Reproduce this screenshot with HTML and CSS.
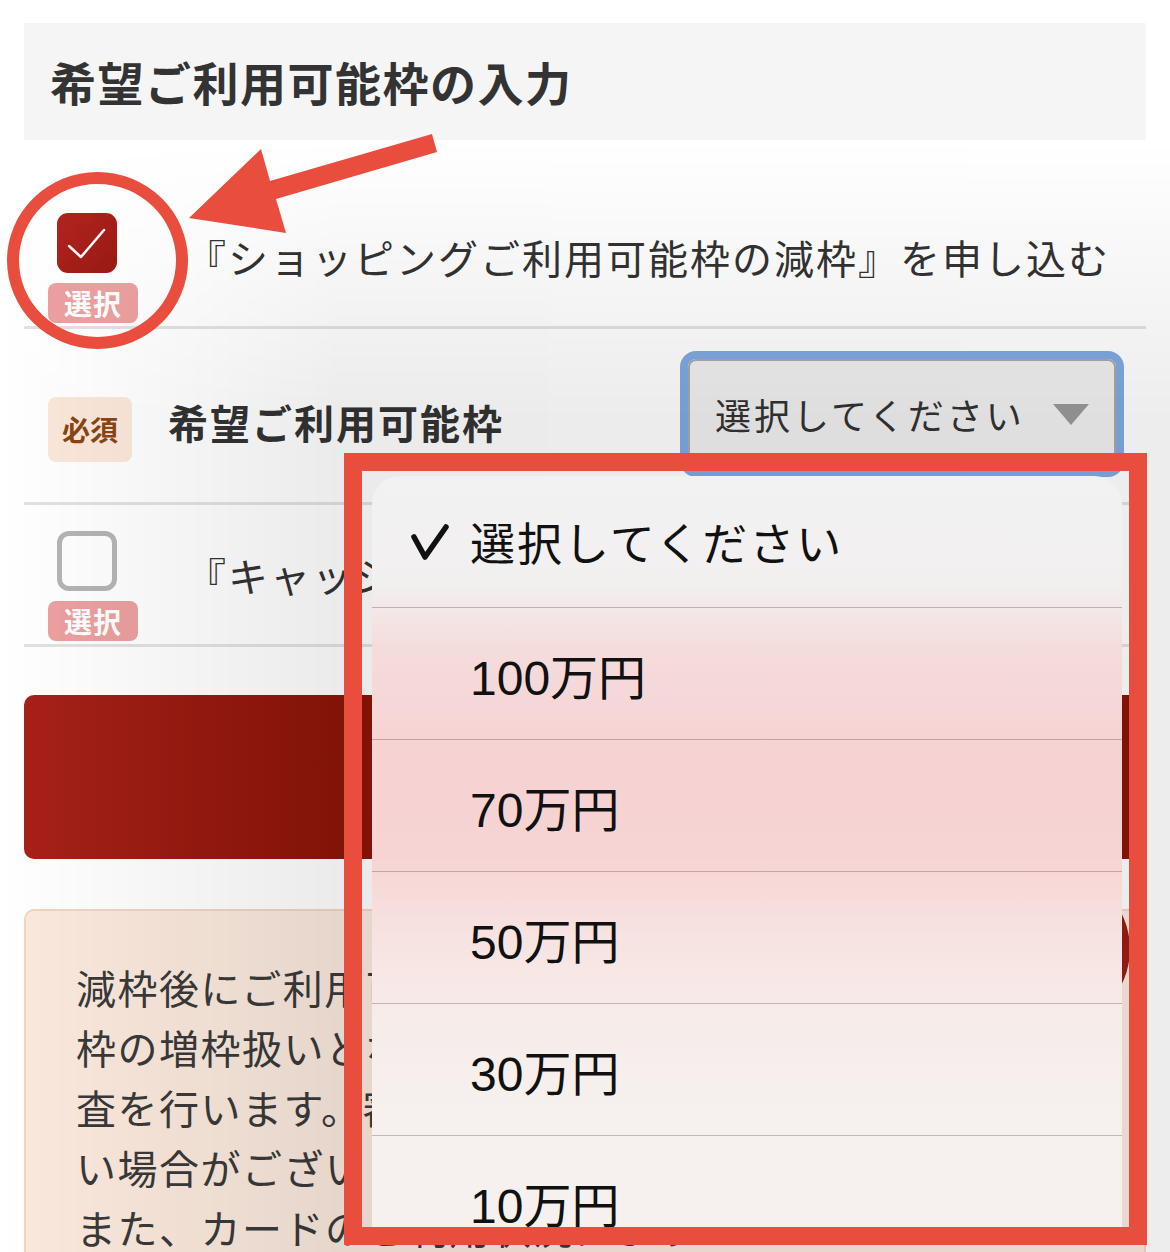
FILE: index.html
```html
<!doctype html>
<html lang="ja">
    <head>
        <meta charset="UTF-8">
        <meta name="viewport" content="width=device-width, initial-scale=1.0">
        <title>希望ご利用可能枠の入力</title>
        <link rel="stylesheet" href="styles.css">
    </head>
    <body>
        <div class="page">
            <h1 class="section-title">希望ご利用可能枠の入力</h1>

            <div class="apply-row">
                <div class="check-col">
                    <span class="checkbox checked">
                        <svg width="60" height="60" viewBox="0 0 60 60"><polyline points="12,33 24,44 47,17" fill="none" stroke="#fff" stroke-width="2.5" stroke-linecap="round" stroke-linejoin="round"/></svg>
                    </span>
                    <span class="check-tag">選択</span>
                </div>
                <p class="apply-text">『ショッピングご利用可能枠の減枠』を申し込む</p>
            </div>

            <div class="limit-row">
                <span class="required">必須</span>
                <span class="limit-label">希望ご利用可能枠</span>
                <div class="select-box">
                    <div class="select-inner">
                        <span>選択してください</span>
                        <span class="caret"></span>
                    </div>
                </div>
            </div>

            <div class="apply-row apply-row-cash">
                <div class="check-col">
                    <span class="checkbox unchecked"></span>
                    <span class="check-tag">選択</span>
                </div>
                <p class="apply-text">『キャッシングご利用可能枠の減枠』を申し込む</p>
            </div>

            <button class="submit-btn" type="button">確認画面へ進む</button>

            <div class="notice">
                <span class="notice-icon"></span>
                <p class="notice-text">減枠後にご利用可能枠を増やす場合は、ご利用可能<br>枠の増枠扱いとなり、所定の審<br>査を行います。審査の結果、ご希望に添えな<br>い場合がございます。<br>また、カードのご利用状況により</p>
            </div>
        </div>

        <div class="dim"></div>

        <div class="mark-circle"></div>
        <svg class="mark-arrow" width="450" height="250" viewBox="0 0 450 250">
            <polygon points="189,218 261,149 270,181 432,134 437,152 276,199 286,233" fill="#e84d3d"/>
        </svg>

        <div class="mark-box">
            <ul class="picker">
                <li class="picker-item picker-current">
                    <svg class="picker-check" width="62" height="44" viewBox="0 0 62 44"><polyline points="10,17 21,37 42,7" fill="none" stroke="#111" stroke-width="5.5" stroke-linecap="round" stroke-linejoin="round"/></svg>
                    <span class="picker-label">選択してください</span>
                </li>
                <li class="picker-item"><span class="picker-amount">100万円</span></li>
                <li class="picker-item"><span class="picker-amount">70万円</span></li>
                <li class="picker-item"><span class="picker-amount">50万円</span></li>
                <li class="picker-item"><span class="picker-amount">30万円</span></li>
                <li class="picker-item"><span class="picker-amount">10万円</span></li>
            </ul>
        </div>
    </body>
</html>
```

FILE: styles.css
```css
body {
    margin: 0;
    font-family: "Noto Sans CJK JP", sans-serif;
    color: #333;
    background: #fff;
    width: 1170px;
    height: 1252px;
    overflow: hidden;
    position: relative;
}

.page {
    padding: 23px 24px 0;
}

.section-title {
    margin: 0;
    height: 117px;
    padding-left: 26px;
    background: #f5f5f5;
    font-size: 46px;
    font-weight: 700;
    line-height: 117px;
    letter-spacing: 1.5px;
    color: #333;
}

.apply-row {
    display: flex;
    align-items: center;
    padding: 73px 0 3px 24px;
    border-bottom: 3px solid #e2e2e2;
}

.apply-row-cash {
    padding-top: 26px;
}

.check-col {
    width: 90px;
    display: flex;
    flex-direction: column;
    align-items: flex-start;
    gap: 10px;
    flex-shrink: 0;
}

.checkbox {
    display: block;
    width: 60px;
    height: 60px;
    margin-left: 9px;
    box-sizing: border-box;
    border-radius: 11px;
}

.checkbox svg {
    display: block;
}

.checked {
    background: linear-gradient(135deg, #b3251f, #9b1a14);
}

.unchecked {
    border: 5px solid #b5b5b5;
    border-radius: 12px;
    background: #fff;
}

.check-tag {
    display: block;
    width: 90px;
    height: 40px;
    border-radius: 8px;
    background: #eda0a0;
    color: #fff;
    font-size: 28px;
    font-weight: 700;
    line-height: 40px;
    text-align: center;
    letter-spacing: 1px;
}

.apply-text {
    margin: 0 0 22px 48px;
    font-size: 40px;
    letter-spacing: 2px;
    white-space: nowrap;
    color: #333;
}

.limit-row {
    display: flex;
    align-items: center;
    padding: 22px 22px 25px 24px;
    border-bottom: 3px solid #e2e2e2;
}

.required {
    width: 84px;
    height: 65px;
    margin-top: 30px;
    border-radius: 8px;
    background: #fbe8da;
    color: #8a4515;
    font-size: 28px;
    font-weight: 700;
    line-height: 65px;
    text-align: center;
}

.limit-label {
    margin: 16px 0 0 36px;
    font-size: 40px;
    font-weight: 700;
    letter-spacing: 2px;
}

.select-box {
    margin-left: auto;
    width: 444px;
    height: 126px;
    box-sizing: border-box;
    border: 8px solid #80aae2;
    border-radius: 16px;
}

.select-inner {
    height: 100%;
    box-sizing: border-box;
    display: flex;
    align-items: center;
    padding: 0 25px 0 25px;
    border: 2px solid #a9a9a9;
    border-radius: 8px;
    background: #f0f0f0;
    font-size: 36px;
    letter-spacing: 3px;
}

.caret {
    margin-left: auto;
    width: 0;
    height: 0;
    border-left: 18px solid transparent;
    border-right: 18px solid transparent;
    border-top: 21px solid #9a9a9a;
}

.submit-btn {
    display: block;
    width: 100%;
    height: 164px;
    margin-top: 48px;
    border: none;
    border-radius: 10px;
    background: linear-gradient(90deg, #a72119 0, #8c1407 340px);
    color: #fff;
    font-family: inherit;
    font-size: 40px;
    font-weight: 700;
}

.notice {
    position: relative;
    margin-top: 50px;
    height: 400px;
    padding: 46px 50px 0;
    border: 2px solid #f1d6c2;
    border-radius: 10px;
    background: #fbe9dd;
}

.notice-icon {
    position: absolute;
    top: -42px;
    right: 14px;
    width: 160px;
    height: 160px;
    border-radius: 50%;
    background: #991c12;
}

.notice-text {
    margin: 0;
    font-size: 40px;
    line-height: 60px;
    letter-spacing: 1.5px;
    white-space: nowrap;
    color: #3a3a3a;
}

.dim {
    position: absolute;
    inset: 0;
    z-index: 1;
    pointer-events: none;
    background: linear-gradient(90deg, rgba(0, 0, 0, 0) 0, rgba(0, 0, 0, .08) 340px, rgba(0, 0, 0, .07) 100%);
    -webkit-mask-image: linear-gradient(180deg, transparent 140px, #000 420px);
    mask-image: linear-gradient(180deg, transparent 140px, #000 420px);
}

.mark-circle {
    position: absolute;
    left: 7px;
    top: 172px;
    width: 181px;
    height: 177px;
    box-sizing: border-box;
    border: 12px solid #e84d3d;
    border-radius: 50%;
    z-index: 3;
}

.mark-arrow {
    position: absolute;
    left: 0;
    top: 0;
    z-index: 3;
}

.mark-box {
    position: absolute;
    left: 344px;
    top: 453px;
    width: 803px;
    height: 792px;
    box-sizing: border-box;
    border: 18px solid #e84d3d;
    padding: 5px 0 0 10px;
    overflow: hidden;
    z-index: 2;
}

.picker {
    list-style: none;
    margin: 0;
    padding: 0;
    width: 750px;
    border-radius: 28px 28px 0 0;
    overflow: hidden;
    background: linear-gradient(180deg, #f2f2f2 0, #f2efef 110px, #f5dcdc 170px, #f6d2d2 280px, #f6d4d3 380px, #f7e3e1 460px, #f6ecea 540px, #f6f1ee 640px, #f6f1ee 100%);
}

.picker-item {
    display: flex;
    align-items: center;
    height: 131px;
    padding-left: 98px;
    border-top: 1px solid rgba(110, 70, 70, .35);
    color: #111;
}

.picker-current {
    padding-left: 32px;
    border-top: none;
}

.picker-check {
    display: block;
    margin-right: 4px;
}

.picker-label {
    font-size: 45px;
    letter-spacing: 2px;
}

.picker-amount {
    font-family: "Liberation Sans", "Noto Sans CJK JP", sans-serif;
    font-size: 48px;
}
```
